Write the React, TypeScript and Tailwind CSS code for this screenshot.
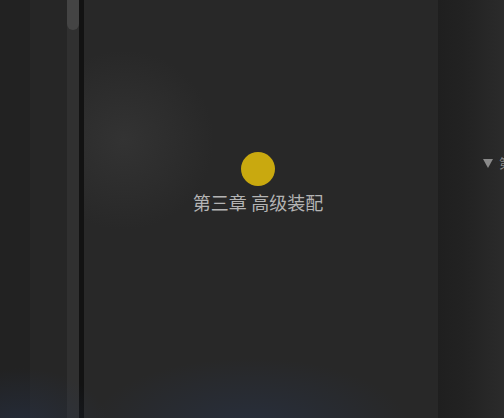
import React from "react";

const App = () => {
  return (
    <div className="relative flex h-[418px] w-[504px] overflow-hidden bg-[#222] font-['Noto_Sans','Noto_Sans_CJK_SC',sans-serif]">
      <div className="w-[30px] bg-[#222]" />
      <div className="w-[37px] bg-[#262626]" />
      <div className="w-[12px] bg-[#303030]">
        <div className="h-[30px] rounded-b-[6px] bg-[#444]" />
      </div>
      <div className="w-[5px] bg-[#121212]" />
      <main className="relative flex flex-1 flex-col items-center bg-[#282828] pr-[6px] pt-[152px]">
        <div className="pointer-events-none absolute inset-0 bg-[radial-gradient(circle_at_40px_140px,rgba(60,60,60,0.55),transparent_90px)]" />
        <div className="relative h-[34px] w-[34px] rounded-full bg-[#c9a90f]" />
        <p className="relative mt-[5px] text-[18px] leading-[24px] text-[#b4b4b4]">第三章 高级装配</p>
      </main>
      <aside className="relative w-[66px] bg-[linear-gradient(90deg,#1f1f1f,#222_40%,#2b2b2b)]">
        <div className="absolute left-[45px] top-[157px] flex items-center gap-[6px]">
          <svg width="10" height="9" viewBox="0 0 10 9">
            <path d="M0 0h10L5 9z" fill="#8a8a8a" />
          </svg>
          <span className="text-[13px] leading-none text-[#888]">第</span>
        </div>
      </aside>
      <div className="pointer-events-none absolute inset-x-0 bottom-0 h-[100px] bg-[radial-gradient(ellipse_160px_70px_at_250px_110px,rgba(40,55,85,0.45),transparent),radial-gradient(ellipse_90px_60px_at_20px_110px,rgba(40,55,85,0.45),transparent)]" />
    </div>
  );
};

export default App;
